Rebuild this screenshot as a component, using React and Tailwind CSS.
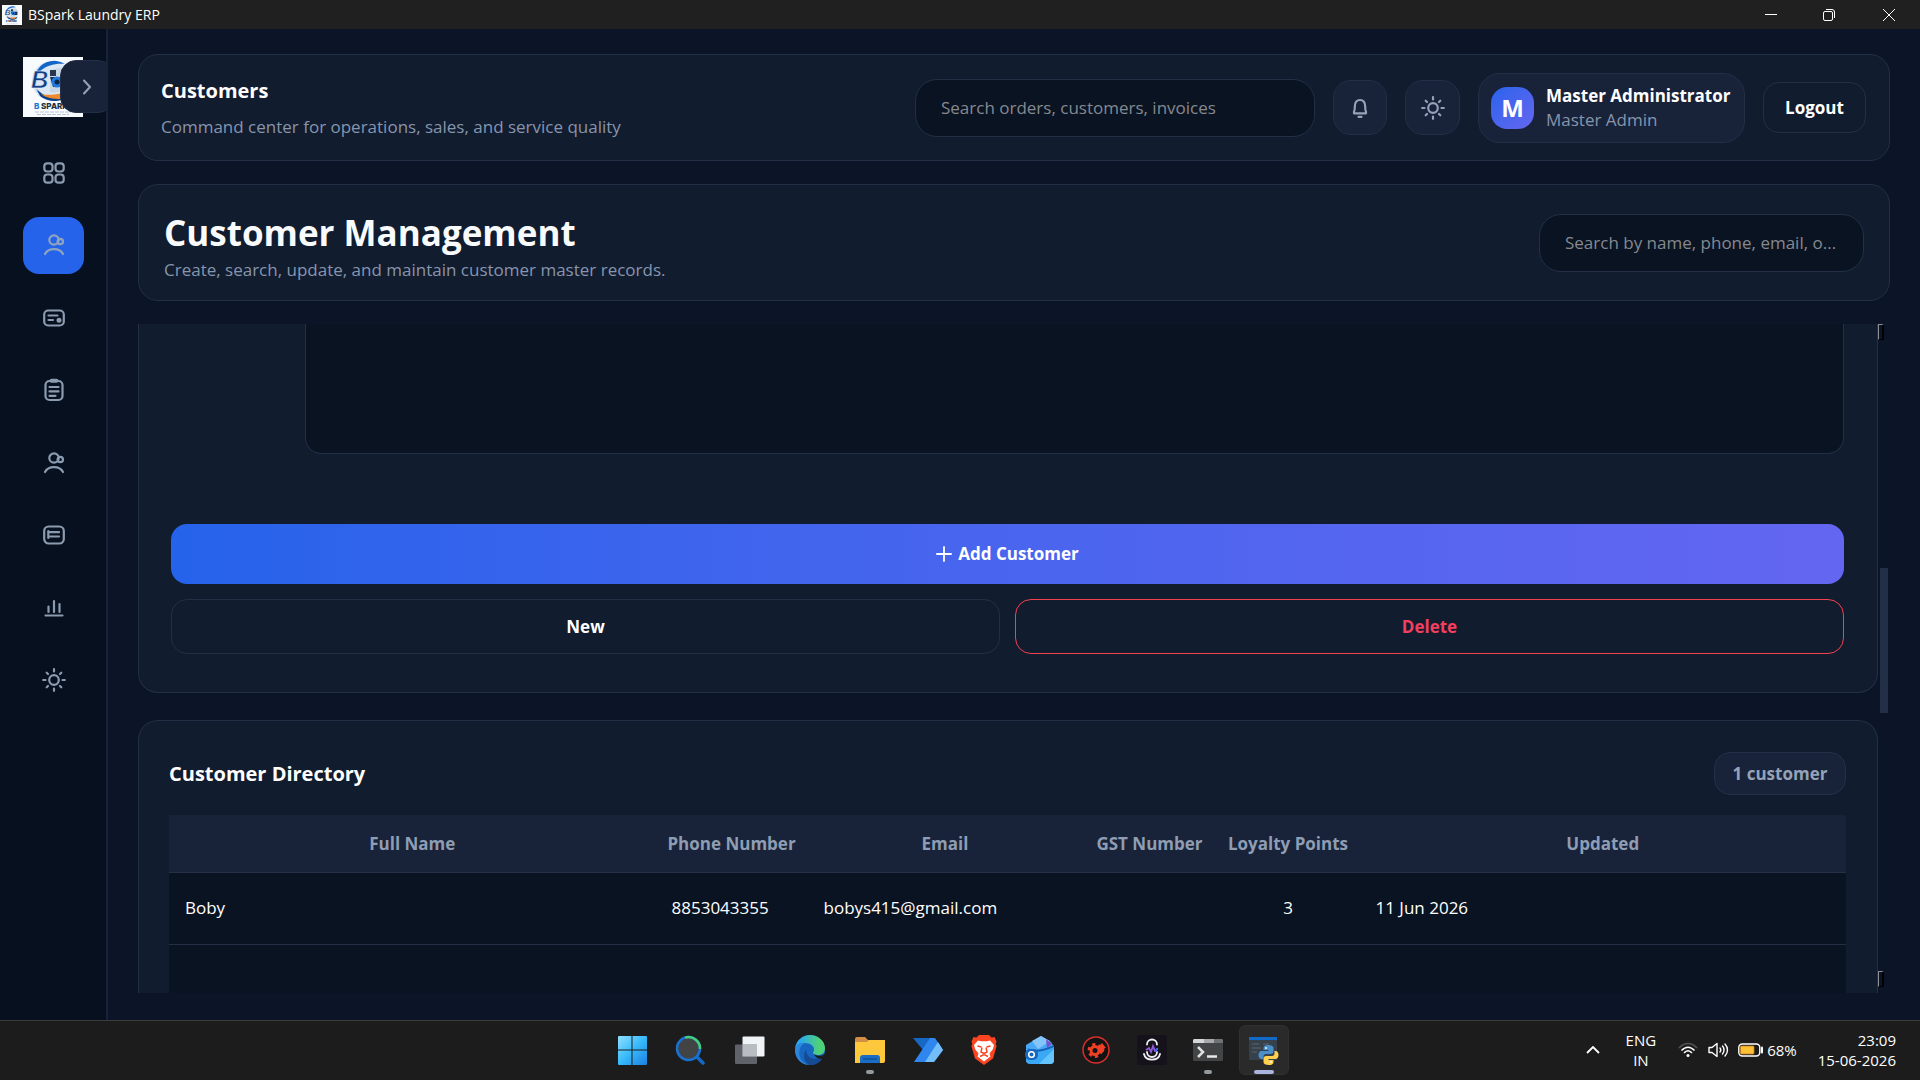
import React from "react";

const stroke = {
  fill: "none",
  stroke: "currentColor",
  strokeWidth: 2.2,
  strokeLinecap: "round",
  strokeLinejoin: "round",
};

function Icon({ children, className = "h-6 w-6" }) {
  return (
    <svg viewBox="0 0 24 24" className={className} aria-hidden="true" {...stroke}>
      {children}
    </svg>
  );
}

const GridIcon = () => (
  <Icon>
    <rect x="2.3" y="2.3" width="8.2" height="8.2" rx="3" />
    <rect x="13.5" y="2.3" width="8.2" height="8.2" rx="3" />
    <rect x="2.3" y="13.5" width="8.2" height="8.2" rx="3" />
    <rect x="13.5" y="13.5" width="8.2" height="8.2" rx="3" />
  </Icon>
);

const PeopleIcon = () => (
  <Icon>
    <circle cx="12" cy="7" r="4.7" />
    <circle cx="18.300" cy="8.500" r="2.700" />
    <path d="M3 21c1.600-3.200 5-4.900 9-4.900s7.400 1.700 9 4.900" />
  </Icon>
);

const CardIcon = () => (
  <Icon>
    <rect x="2.200" y="4.500" width="19.600" height="15" rx="4" />
    <path d="M6.500 9.500h9M6.500 14h4.500" />
    <circle cx="17" cy="14.300" r="1.400" fill="currentColor" />
  </Icon>
);

const ClipboardIcon = () => (
  <Icon>
    <rect x="3.500" y="3" width="17" height="19" rx="4" />
    <path d="M9.500 2.800h5" strokeWidth="4" />
    <path d="M7.500 9h9M7.500 13.400h9M7.500 17.800h6" />
  </Icon>
);

const ListIcon = () => (
  <Icon>
    <rect x="2.200" y="3.500" width="19.600" height="17" rx="4.500" />
    <path d="M6.500 9.200h10.500M6.500 13.500h10.500M6.300 8v7" />
  </Icon>
);

const BarsIcon = () => (
  <Icon>
    <path d="M3.500 19.500h17M6.500 10.500v5.500M12 5v11M17.500 8v8" />
  </Icon>
);

const SunIcon = () => (
  <Icon>
    <circle cx="12" cy="12" r="4.800" />
    <path d="M12 1.200v2.300M12 20.500v2.300M1.200 12h2.300M20.500 12h2.300M4.700 4.700l1.300 1.300M18 18l1.300 1.300M4.700 19.300l1.300-1.300M18 6l1.300-1.300" />
  </Icon>
);

const BellIcon = () => (
  <Icon>
    <path d="M6 17.300v-1.500c.8-1 .8-2 .8-5C6.800 6.500 8.800 4 12 4s5.200 2.500 5.200 6.800c0 3 0 4 .8 5v1.500z" />
    <path d="M10.500 20.800h3" />
  </Icon>
);

function Logo({ className }) {
  return (
    <svg viewBox="0 0 60 60" className={className} role="img" aria-label="BSpark">
      <rect width="60" height="60" fill="#f8fbfd" />
      <circle cx="29" cy="24" r="20" fill="#dbe7f2" />
      <path d="M42 7A20 20 0 1 0 47 36C36 44 20 42 13 32 8 20 20 5 42 7z" fill="#1565c8" />
      <path d="M14 32c8 10 22 10 32 3l-3 6c-9 5-20 3-26-2z" fill="#0c3f86" />
      <path d="M18 37c7 2 15 0 24-1l-4 6c-8 0-15-1-20-5z" fill="#f08a2c" />
      <path d="M27 14c8-5 16-4 20 3v8c-4 8-12 12-20 10z" fill="#c9d6e3" />
      <path d="M27 13h6v6h-6z" fill="#28374b" />
      <path d="M27 20h19v10H30z" fill="#16304f" />
      <circle cx="34" cy="25" r="5.500" fill="#1f7ae0" />
      <circle cx="34" cy="25" r="2.500" fill="#0a2548" />
      <text x="8" y="31" fontFamily="Liberation Sans, sans-serif" fontStyle="italic" fontWeight="700" fontSize="24" fill="#123f86" stroke="#e9f3fc" strokeWidth="0.500">B</text>
      <text x="11" y="52" fontFamily="Inter, sans-serif" fontWeight="800" fontSize="8" fill="#24303f">
        <tspan fill="#1976d2">B</tspan> SPARK
      </text>
      <path d="M12 55h36M14 57.500h32" stroke="#a9b8c9" strokeWidth="0.800" strokeDasharray="4 1" />
    </svg>
  );
}

const navItems = [
  { label: "Dashboard", icon: GridIcon },
  { label: "Customers", icon: PeopleIcon, active: true },
  { label: "Billing", icon: CardIcon },
  { label: "Orders", icon: ClipboardIcon },
  { label: "Staff", icon: PeopleIcon },
  { label: "Services", icon: ListIcon },
  { label: "Reports", icon: BarsIcon },
  { label: "Settings", icon: SunIcon },
];

function TitleBar() {
  return (
    <header className="flex h-[29px] shrink-0 items-center justify-between bg-[#202020] text-white">
      <div className="flex items-center gap-[6px] pl-[2px]">
        <Logo className="h-5 w-5" />
        <span className="text-sm leading-5">BSpark Laundry ERP</span>
      </div>
      <div className="flex h-full">
        <button aria-label="Minimize" className="grid w-[58px] place-items-center">
          <svg viewBox="0 0 12 12" className="h-3 w-3" stroke="white" fill="none"><path d="M0 5.500h12" /></svg>
        </button>
        <button aria-label="Restore" className="grid w-[58px] place-items-center">
          <svg viewBox="0 0 12 12" className="h-3 w-3" stroke="white" fill="none">
            <rect x="0.500" y="2.500" width="9" height="9" rx="1.500" />
            <path d="M3 .5h6a2.500 2.500 0 0 1 2.500 2.500v6" />
          </svg>
        </button>
        <button aria-label="Close" className="grid w-[62px] place-items-center">
          <svg viewBox="0 0 12 12" className="h-3 w-3" stroke="white" fill="none"><path d="M0 0l12 12M12 0L0 12" /></svg>
        </button>
      </div>
    </header>
  );
}

function Sidebar() {
  return (
    <aside className="relative w-[108px] shrink-0 overflow-hidden border-r-2 border-[#17233a] bg-[#06101e] pl-[23px] pt-7">
      <Logo className="h-[60px] w-[60px]" />
      <button
        aria-label="Expand sidebar"
        className="absolute left-[60px] top-[31px] grid h-[53px] w-[54px] place-items-center rounded-2xl border border-[#222f47] bg-[#18233a] text-[#94a3b8]"
      >
        <svg viewBox="0 0 10 16" className="h-4 w-[10px]" fill="none" stroke="currentColor" strokeWidth="2" strokeLinecap="round" strokeLinejoin="round">
          <path d="M2 1.500L8 8l-6 6.500" />
        </svg>
      </button>
      <nav className="mt-[27px] flex h-[565px] flex-col justify-between">
        {navItems.map(({ label, icon: NavIcon, active }) => (
          <button
            key={label}
            aria-label={label}
            className={
              active
                ? "grid h-[57px] w-[61px] place-items-center rounded-2xl bg-[#2563eb] text-[#8fa5bd]"
                : "grid h-[57px] w-[61px] place-items-center rounded-2xl text-[#8b9bb0]"
            }
          >
            <NavIcon />
          </button>
        ))}
      </nav>
    </aside>
  );
}

function TopBar() {
  return (
    <section className="flex h-[107px] shrink-0 items-center gap-[18px] rounded-[20px] border border-[#222f47] bg-[#111c2f] pl-[22px] pr-[23px]">
      <div className="min-w-0 flex-1 pt-[2px]">
        <h2 className="text-xl leading-7 font-bold text-white">Customers</h2>
        <p className="mt-2 text-[17px] leading-7 text-[#8795ad]">Command center for operations, sales, and service quality</p>
      </div>
      <input
        type="search"
        aria-label="Search orders, customers, invoices"
        placeholder="Search orders, customers, invoices"
        className="h-[58px] w-[400px] rounded-[22px] border border-[#222f47] bg-[#0a1322] px-[25px] text-[17px] text-white placeholder:text-[#85898f]"
      />
      <button aria-label="Notifications" className="grid h-[55px] w-[54px] place-items-center rounded-[18px] border border-[#222f47] bg-[#18233a] text-[#94a3b8]">
        <BellIcon />
      </button>
      <button aria-label="Toggle theme" className="grid h-[55px] w-[55px] place-items-center rounded-[18px] border border-[#222f47] bg-[#18233a] text-[#94a3b8]">
        <SunIcon />
      </button>
      <div className="flex h-[70px] w-[267px] items-center gap-3 rounded-[22px] border border-[#222f47] bg-[#18233a] pl-3">
        <div className="grid h-[42px] w-[43px] place-items-center rounded-2xl bg-linear-to-br from-[#2563eb] to-[#6366f1] text-2xl leading-none font-bold text-white">M</div>
        <div className="whitespace-nowrap">
          <div className="text-[17px] leading-6 font-bold text-white">Master Administrator</div>
          <div className="text-[17px] leading-6 text-[#8795ad]">Master Admin</div>
        </div>
      </div>
      <button className="h-[51px] w-[103px] rounded-2xl border border-[#222f47] text-[17px] font-bold text-white">Logout</button>
    </section>
  );
}

function PageHeader() {
  return (
    <section className="flex h-[117px] shrink-0 items-center justify-between rounded-[20px] border border-[#222f47] bg-[#111c2f] px-[25px]">
      <div className="pt-2">
        <h1 className="text-[35px] leading-[46px] font-bold text-[#f8fafc]">Customer Management</h1>
        <p className="text-[17px] leading-7 text-[#8795ad]">Create, search, update, and maintain customer master records.</p>
      </div>
      <input
        type="search"
        aria-label="Search customers"
        placeholder="Search by name, phone, email, o..."
        className="h-[58px] w-[325px] rounded-[22px] border border-[#222f47] bg-[#0a1322] pr-2 pl-[25px] text-[17px] text-white placeholder:text-[#85898f]"
      />
    </section>
  );
}

function CustomerForm() {
  return (
    <form className="shrink-0 rounded-b-[20px] border border-t-0 border-[#222f47] bg-[#111c2f] pr-[33px] pb-[38px] pl-8" onSubmit={(e) => e.preventDefault()}>
      <textarea
        aria-label="Notes"
        className="ml-[134px] block h-[130px] w-[calc(100%-134px)] resize-none rounded-b-2xl border border-t-0 border-[#222f47] bg-[#0a1322] p-4 text-[17px] text-white"
      />
      <button className="mt-[70px] flex h-[60px] w-full items-center justify-center gap-[6px] rounded-2xl bg-linear-to-r from-[#2563eb] to-[#6366f1] text-[17px] font-bold text-white">
        <svg viewBox="0 0 16 16" className="h-4 w-4" stroke="currentColor" strokeWidth="1.800" strokeLinecap="round"><path d="M8 .9v14.200M.9 8h14.200" /></svg>
        Add Customer
      </button>
      <div className="mt-[15px] grid grid-cols-2 gap-[15px] text-[17px] font-bold">
        <button type="button" className="h-[55px] rounded-2xl border border-[#222f47] text-white">New</button>
        <button type="button" className="h-[55px] rounded-2xl border border-[#f2414f] text-[#f43f5e]">Delete</button>
      </div>
    </form>
  );
}

function Directory() {
  const heads = ["Full Name", "Phone Number", "Email", "GST Number", "Loyalty Points", "Updated"];
  return (
    <section className="mt-[27px] flex flex-1 flex-col rounded-t-[20px] border border-b-0 border-[#222f47] bg-[#111c2f] pt-[31px] pr-[31px] pl-[30px]">
      <div className="flex items-center justify-between">
        <h2 className="text-xl leading-7 font-bold text-white">Customer Directory</h2>
        <span className="grid h-[43px] w-[132px] place-items-center rounded-2xl border border-[#222f47] bg-[#18233a] text-[17px] font-bold text-[#94a3b8]">1 customer</span>
      </div>
      <div className="mt-5 flex-1 bg-[#0a1322]">
        <table className="w-full table-fixed border-collapse text-[17px] text-white">
          <colgroup>
            <col />
            <col className="w-[152px]" />
            <col className="w-[275px]" />
            <col className="w-[134px]" />
            <col className="w-[143px]" />
            <col />
          </colgroup>
          <thead>
            <tr className="h-[57px] border-b border-[#243149] bg-[#18233a] text-[#8f9db3]">
              {heads.map((h) => (
                <th key={h} scope="col" className="p-0 text-center font-bold whitespace-nowrap">{h}</th>
              ))}
            </tr>
          </thead>
          <tbody>
            <tr className="h-[72px] border-b border-[#222f47]">
              <td className="px-4">Boby</td>
              <td className="px-4">8853043355</td>
              <td className="px-4">bobys415@gmail.com</td>
              <td className="px-4" />
              <td className="px-4 text-center">3</td>
              <td className="px-4">11 Jun 2026</td>
            </tr>
          </tbody>
        </table>
      </div>
    </section>
  );
}

const ScrollArrow = () => <span className="h-4 w-[6px] border-t border-r-2 border-b border-l border-t-[#8d9096] border-r-black border-b-black border-l-[#8d9096] bg-[#0c1526]" />;

function ScrollRegion() {
  return (
    <div className="flex min-h-0 flex-1 overflow-hidden">
      <div className="flex min-w-0 flex-1 flex-col">
        <CustomerForm />
        <Directory />
      </div>
      <div className="flex w-3 flex-col items-start pb-[6px]" aria-hidden="true">
        <ScrollArrow />
        <div className="flex-[228]" />
        <div className="ml-[2px] h-[145px] w-2 bg-[#232f47]" />
        <div className="flex-[257]" />
        <ScrollArrow />
      </div>
    </div>
  );
}

/* ---------- Taskbar ---------- */

const TbSvg = ({ children }) => <svg viewBox="0 0 30 30" className="h-[30px] w-[30px]" aria-hidden="true">{children}</svg>;

const StartIcon = () => (
  <TbSvg>
    <defs><linearGradient id="start" x1="0" y1="0" x2="1" y2="1"><stop offset="0" stopColor="#8fe0ff" /><stop offset="0.500" stopColor="#37b9fb" /><stop offset="1" stopColor="#1c7fe0" /></linearGradient></defs>
    <path d="M1 2a1 1 0 0 1 1-1h12.500v13.500H1zM15.500 1H29a1 1 0 0 1 1 1v12.500H15.500zM1 15.500h13.500V30H2a1 1 0 0 1-1-1zM15.500 15.500H30V29a1 1 0 0 1-1 1H15.500z" fill="url(#start)" />
  </TbSvg>
);
const SearchIcon = () => (
  <TbSvg>
    <path d="M21 21l7 7" stroke="#1668c7" strokeWidth="3.500" strokeLinecap="round" />
    <circle cx="13.500" cy="13.500" r="11.500" fill="#414345" stroke="#1971d0" strokeWidth="2.500" />
    <path d="M10 2.600A11.500 11.500 0 0 1 25 14" fill="none" stroke="#45cf78" strokeWidth="2.500" />
  </TbSvg>
);
const TaskViewIcon = () => (
  <TbSvg>
    <rect x="7.500" y="1.500" width="22" height="20" rx="1" fill="#f1f4f6" />
    <rect x="0" y="9.500" width="22" height="19.500" rx="1" fill="#6b6f76" opacity="0.850" />
    <path d="M7.500 9.500H22v12H7.500z" fill="#b9bcc1" />
  </TbSvg>
);
const EdgeIcon = () => (
  <TbSvg>
    <defs><linearGradient id="edge" x1="0" y1="0" x2="1" y2="0"><stop offset="0.200" stopColor="#2ba9e8" /><stop offset="0.800" stopColor="#4fd178" /></linearGradient></defs>
    <circle cx="15" cy="15" r="15" fill="#1767c0" />
    <path d="M0 14C1 5 8 0 15 0c8 0 15 6 15 13 0 5-3 7-7 7-3 0-5-1-5-2 0-1 1-1 1-4 0-3-4-6-9-6S1 10 0 14z" fill="url(#edge)" />
    <path d="M0 15c0-5 5-8 10-7-5 2-7 9-5 14 1 4 5 7 9 8C6 30 0 23 0 15z" fill="#2b86dc" />
    <path d="M11.500 15c-1 6 5 11 16 7.500-2 4-6 7.500-11 7.500-7 0-10-11-5-15z" fill="#154a94" />
    <path d="M31 18c-2 3-9 4-12 1 2 5 7 5.500 9 4.500z" fill="#1c1c1c" />
  </TbSvg>
);
const FolderIcon = () => (
  <TbSvg>
    <path d="M0 4a2 2 0 0 1 2-2h8l3 3h15v8H0z" fill="#d38e45" />
    <path d="M0 7h12l2-2h16v21a2 2 0 0 1-2 2H0z" fill="#fdc83c" />
    <path d="M5 28v-5a3 3 0 0 1 3-3h14a3 3 0 0 1 3 3v5z" fill="#1a6dc4" />
    <path d="M8 24h14" stroke="#124f97" strokeWidth="1.500" />
  </TbSvg>
);
const FlowIcon = () => (
  <TbSvg>
    <path d="M0 3h20l-10 12z" fill="#1767c5" />
    <path d="M17 3h5l8 12-9 12H1z" fill="#2f86ee" />
    <path d="M25 7l5 8-9 12h-9z" fill="#73bdfb" />
  </TbSvg>
);
const BraveIcon = () => (
  <TbSvg>
    <path d="M10 0h10l2.500 2.500 3-.5 2 4.500-.7 2 .7 3-3.500 12L15 30 6 23.500 2.500 11.500l.7-3-.7-2L4.500 2l3 .5z" fill="#fb4420" />
    <path d="M9 5.500l3 .7h6l3-.7 4 4.500-1 4-3.500 4.500 1 3L15 26.500 8.500 21.500l1-3L6 14l-1-4z" fill="#fff" />
    <path d="M8.500 11l4 1M21.500 11l-4 1M13 12.500l-1 4.500 3 1.500 3-1.500-1-4.500M11 21.500l4-2 4 2" fill="none" stroke="#fb4420" strokeWidth="1.500" />
  </TbSvg>
);
const WalletIcon = () => (
  <TbSvg>
    <path d="M1 10L16 1l10 6 3 5v15H1z" fill="#4aa9f6" />
    <path d="M16 1l9 5-12 8-6-8z" fill="#83c5f8" />
    <path d="M21 4l6 5-5 4z" fill="#7552cf" />
    <path d="M2 13c8 3 16 2 27-3v4L14 22z" fill="#155fb5" />
    <path d="M1 15c8 3 17 2 28-3v13a4 4 0 0 1-4 4H5a4 4 0 0 1-4-4z" fill="#39a9f5" />
    <path d="M29 14v11a4 4 0 0 1-4 4H14z" fill="#65c4fb" />
    <rect x="0" y="14" width="13" height="11" rx="5" fill="#1667bd" />
    <circle cx="6.500" cy="19.500" r="2.800" fill="#1667bd" stroke="#fff" strokeWidth="1.500" />
  </TbSvg>
);
const GearIcon = () => (
  <TbSvg>
    <circle cx="15" cy="15" r="13" fill="#131313" stroke="#d62f2d" strokeWidth="1.500" />
    <circle cx="14" cy="15.500" r="4" fill="none" stroke="#ef3f25" strokeWidth="3" />
    <circle cx="14" cy="15.500" r="6" fill="none" stroke="#ef3f25" strokeWidth="3" strokeDasharray="3.100 3.100" />
    <path d="M19 18v-5h-2.500L21 8l4 5h-1.500c0 3-1 5-4.500 5z" fill="#ef3f25" />
  </TbSvg>
);
const VoiceIcon = () => (
  <TbSvg>
    <rect width="30" height="30" rx="3" fill="#15121b" />
    <path d="M10 9.500a5 5 0 0 1 10 0M10 17a5 5 0 0 0 10 0M7 19c1.500 7.500 14.500 7.500 16 0" fill="none" stroke="#eef0f4" strokeWidth="1.800" strokeLinecap="round" />
    <path d="M9 15l3-2 2 4 2-6 2 5h2" fill="none" stroke="#9258dc" strokeWidth="1.800" />
    <path d="M18 16l2-2h1" fill="none" stroke="#326ff2" strokeWidth="2" />
  </TbSvg>
);
const TerminalIcon = () => (
  <TbSvg>
    <rect x="0" y="4" width="30" height="22" rx="1.500" fill="#424446" />
    <path d="M1 4h10v4H0V5z" fill="#d4d7d9" /><path d="M11 4h10v4H11z" fill="#a7aaad" /><path d="M21 4h8l1 1v3h-9z" fill="#707376" />
    <path d="M5 12l5 5-5 5" fill="none" stroke="#dfe1e2" strokeWidth="2.500" />
    <path d="M14 21.500h10" stroke="#e7e8e9" strokeWidth="2.500" />
  </TbSvg>
);
const PythonIcon = () => (
  <TbSvg>
    <rect x="0" y="2" width="28" height="23" rx="1" fill="#36414c" />
    <path d="M0 2h28v3H0z" fill="#1169c9" />
    <path d="M3 9h7M3 13h9M3 17h5M14 9h6" stroke="#5c6670" />
    <g transform="translate(9.500 10)">
      <path d="M9.500 0c-3 0-4.500 1-4.500 3v2h5v1H3C1 6 0 8 0 10s1 4 3 4h2v-2.500C5 9.500 6.500 9 8 9h4c2 0 3-1 3-3V3c0-2-2-3-5.500-3z" fill="#4a8fcb" />
      <path d="M10.500 20c3 0 4.500-1 4.500-3v-2h-5v-1h7c2 0 3-2 3-4s-1-4-3-4h-1v2.500c0 2-1.500 2.500-3 2.500H8c-2 0-3 1-3 3v3c0 2 2 3 5.500 3z" fill="#ffd14e" />
      <circle cx="7.500" cy="3" r="0.900" fill="#fff" /><circle cx="12.500" cy="17" r="0.900" fill="#fff" />
    </g>
  </TbSvg>
);

const apps = [
  { label: "Start", icon: StartIcon },
  { label: "Search", icon: SearchIcon, wide: true },
  { label: "Task view", icon: TaskViewIcon, wide: true },
  { label: "Edge", icon: EdgeIcon, wide: true },
  { label: "File Explorer", icon: FolderIcon, wide: true, running: true },
  { label: "Power Automate", icon: FlowIcon },
  { label: "Brave", icon: BraveIcon },
  { label: "Wallet", icon: WalletIcon },
  { label: "Utility", icon: GearIcon },
  { label: "Voice", icon: VoiceIcon },
  { label: "Terminal", icon: TerminalIcon, running: true },
  { label: "Python", icon: PythonIcon, active: true },
];

function Taskbar() {
  return (
    <footer className="grid h-[60px] shrink-0 grid-cols-[1fr_auto_1fr] items-center border-t border-[#3c3c3c] bg-[#1c1c1c] pb-[2px] text-white">
      <div />
      <div className="flex h-full items-center pr-6">
        {apps.map(({ label, icon: AppIcon, wide, running, active }) => (
          <div key={label} className={wide ? "grid w-[60px] place-items-center" : "grid w-14 place-items-center"}>
            <button
              aria-label={label}
              className={
                active
                  ? "relative grid h-[50px] w-[50px] place-items-center rounded-md border border-[#303030] bg-[#2a2a2a]"
                  : "relative grid h-[50px] w-[50px] place-items-center"
              }
            >
              <AppIcon />
              {running && <span className="absolute bottom-px h-1 w-2 rounded-full bg-[#929a9e]" />}
              {active && <span className="absolute bottom-0 h-1 w-5 rounded-full bg-[#aab4de]" />}
            </button>
          </div>
        ))}
      </div>
      <div className="flex items-center justify-end pr-6 text-[15px] leading-5">
        <button aria-label="Show hidden icons" className="mr-[26px]">
          <svg viewBox="0 0 14 8" className="h-2 w-[14px]" fill="none" stroke="white" strokeWidth="1.800"><path d="M1 7l6-6 6 6" /></svg>
        </button>
        <span className="mr-[22px] text-center">ENG<br />IN</span>
        <svg viewBox="0 0 20 16" className="mr-[10px] h-4 w-5" fill="none" stroke="white" strokeWidth="1.500" aria-label="Wi-Fi">
          <path d="M1 6c5-6 13-6 18 0" stroke="#555" />
          <path d="M3.500 8.500c4-4.500 9-4.500 13 0M6 11c2.500-3 5.500-3 8 0" />
          <circle cx="10" cy="13.500" r="1.500" fill="white" stroke="none" />
        </svg>
        <svg viewBox="0 0 21 16" className="mr-[9px] h-4 w-[21px]" fill="none" stroke="white" strokeWidth="1.400" strokeLinecap="round" strokeLinejoin="round" aria-label="Volume">
          <path d="M1 5.500h3L9 1.500v13l-5-4H1zM12 6c1 1.200 1 2.800 0 4M14.500 4c2 2.200 2 5.800 0 8M17 2c3.300 3.500 3.300 8.500 0 12" />
        </svg>
        <svg viewBox="0 0 25 14" className="mr-1 h-[14px] w-[25px]" fill="none" stroke="white" strokeWidth="1.400" aria-label="Battery">
          <rect x="0.800" y="1" width="21" height="12" rx="3.500" />
          <path d="M24 4.500v5" strokeWidth="2" strokeLinecap="round" />
          <rect x="2.500" y="3" width="13.500" height="8" rx="1" fill="#fdc136" stroke="#c87f1e" strokeWidth="0.800" />
        </svg>
        <span className="mr-[21px] text-[15px]">68%</span>
        <span className="text-right">23:09<br />15-06-2026</span>
      </div>
    </footer>
  );
}

export default function App() {
  return (
    <div className="flex h-screen flex-col overflow-hidden bg-[#0c1527] font-['Open_Sans','Noto_Sans',sans-serif]">
      <TitleBar />
      <div className="flex min-h-0 flex-1">
        <Sidebar />
        <main className="flex min-w-0 flex-1 flex-col gap-[23px] px-[30px] pt-[25px] pb-[27px]">
          <TopBar />
          <PageHeader />
          <ScrollRegion />
        </main>
      </div>
      <Taskbar />
    </div>
  );
}
